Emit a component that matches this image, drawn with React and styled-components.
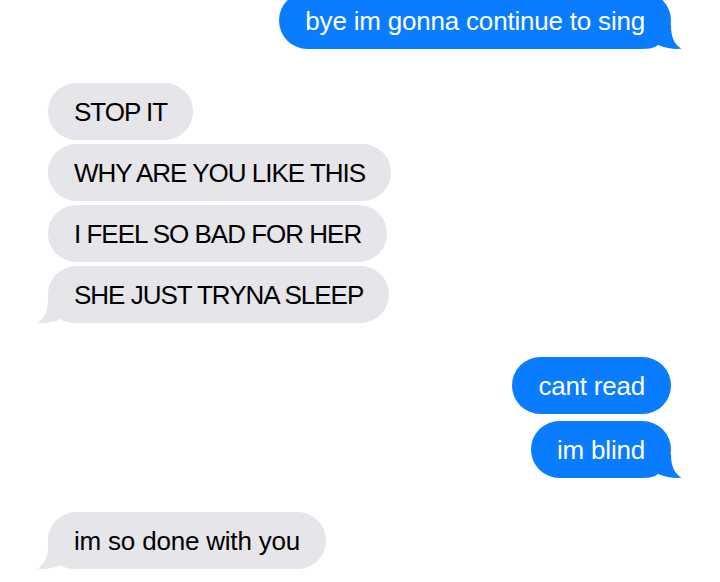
import React from "react";
import styled, { createGlobalStyle } from "styled-components";

const GlobalStyle = createGlobalStyle`
  html, body {
    margin: 0;
    padding: 0;
    background: #ffffff;
    overflow: hidden;
  }
  body {
    font-family: "Liberation Sans", Arial, sans-serif;
  }
`;

const BLUE = "#0a7cff";
const GRAY = "#e5e5ea";

const Thread = styled.div`
  width: 720px;
  height: 582px;
  box-sizing: border-box;
  padding: 0 49px 0 48px;
  margin-top: -8px;
  display: flex;
  flex-direction: column;
  gap: 34px;
`;

const Group = styled.div`
  display: flex;
  flex-direction: column;
  align-items: ${(p) => (p.$mine ? "flex-end" : "flex-start")};
  gap: ${(p) => (p.$mine ? "7px" : "4px")};
`;

const Bubble = styled.div`
  position: relative;
  box-sizing: border-box;
  height: 57px;
  padding: 14px 26px 12px;
  border-radius: 28.5px;
  font-size: 26px;
  line-height: 31px;
  letter-spacing: ${(p) => (p.$caps ? "-1px" : "-0.2px")};
  white-space: nowrap;
  background: ${(p) => (p.$mine ? BLUE : GRAY)};
  color: ${(p) => (p.$mine ? "#ffffff" : "#000000")};
`;

const TailSvg = styled.svg`
  position: absolute;
  bottom: 0;
  width: 36px;
  height: 24px;
  ${(p) =>
    p.$mine
      ? "right: -11px;"
      : "left: -11px; transform: scaleX(-1);"}
`;

function Tail({ mine }) {
  return (
    <TailSvg $mine={mine} viewBox="0 0 36 24" aria-hidden="true">
      <path
        d="M0 0 H25 C25 11 27.5 19 35.5 23.8 C28 24.4 20 23.4 12 20 C9 22.6 5 23.6 0 23.6 Z"
        fill={mine ? BLUE : GRAY}
      />
    </TailSvg>
  );
}

const conversation = [
  { mine: true, lines: ["bye im gonna continue to sing"] },
  {
    mine: false,
    lines: ["STOP IT", "WHY ARE YOU LIKE THIS", "I FEEL SO BAD FOR HER", "SHE JUST TRYNA SLEEP"],
  },
  { mine: true, lines: ["cant read", "im blind"] },
  { mine: false, lines: ["im so done with you"] },
];

export default function App() {
  return (
    <>
      <GlobalStyle />
      <Thread>
        {conversation.map((group, gi) => (
          <Group key={gi} $mine={group.mine}>
            {group.lines.map((text, i) => (
              <Bubble key={i} $mine={group.mine} $caps={text === text.toUpperCase()}>
                {text}
                {i === group.lines.length - 1 && <Tail mine={group.mine} />}
              </Bubble>
            ))}
          </Group>
        ))}
      </Thread>
    </>
  );
}
